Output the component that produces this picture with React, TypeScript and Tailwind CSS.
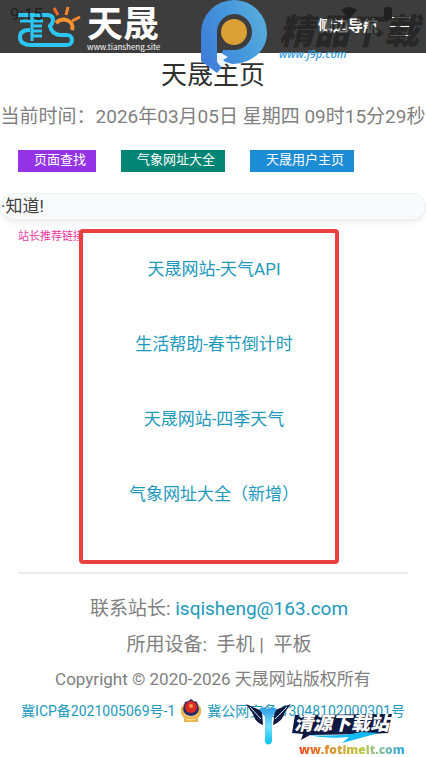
import React from "react";

const links = ["天晟网站-天气API", "生活帮助-春节倒计时", "天晟网站-四季天气", "气象网址大全（新增）"];

function SiteLogo() {
  return (
    <svg viewBox="0 0 66 44" className="h-11 w-[66px]" fill="none" aria-hidden="true">
      <path
        d="M1 10 H30 Q36 10 36 15 Q36 18 33 21 Q35 30 44 30 H50 A5 5 0 0 1 50 40 H15 C5 40 3 36 3 32 C3 26 8 25 13 25"
        stroke="#2cc6f5"
        strokeWidth="4"
      />
      <path d="M3 16 H26 M15 8 V36 M15 21 H25 M15 26 H25 M15 31 H25" stroke="#2cc6f5" strokeWidth="3" />
      <path d="M39 18 C46 11 58 16 55 25" stroke="#fa9132" strokeWidth="4" />
      <path d="M37 3 L41 10" stroke="#f06a24" strokeWidth="3" />
      <path d="M51 2 L49 10 M63 12 L55 16" stroke="#f8872c" strokeWidth="3" />
    </svg>
  );
}

function RoundMark() {
  return (
    <svg viewBox="0 0 68 76" className="absolute top-0 left-[200px] h-[76px] w-[68px]" aria-hidden="true">
      <defs>
        <linearGradient id="mark" x1="0" y1="0.6" x2="1" y2="0.2">
          <stop offset="0" stopColor="#3f7fda" />
          <stop offset="0.5" stopColor="#4598dc" />
          <stop offset="1" stopColor="#5aaeda" />
        </linearGradient>
      </defs>
      <path
        fill="url(#mark)"
        fillRule="evenodd"
        d="M34 0 A33 33 0 0 1 67 33 C67 52 50 64 32 64 L26 62 L17 73 L1 61 V33 A33 33 0 0 1 34 0 Z M34 14 A18 18 0 0 0 17 32 V54 L21 57 L23 50 H34 A18 18 0 0 0 52 32 A18 18 0 0 0 34 14 Z"
      />
      <path fill="#edf6fc" d="M17 53 H21 L28 57 L23 60 L27 63 L21 67 L17 62 Z" />
      <circle cx="34" cy="32" r="13" fill="#dba034" />
    </svg>
  );
}

function PoliceBadge() {
  return (
    <svg viewBox="0 0 22 24" className="h-6 w-[22px]" aria-hidden="true">
      <path d="M1 9 Q0 16 4 19 V23 H18 V19 Q22 16 21 9 L18 5 H4 Z" fill="#e7b64f" />
      <path d="M5 3 Q8 3 11 0 Q14 3 17 3 L19 10 Q18 16 11 18 Q4 16 3 10 Z" fill="#29296b" />
      <circle cx="11" cy="8" r="6" fill="#d92b22" />
      <circle cx="11" cy="7" r="2" fill="#f5994c" />
      <path d="M4 15 Q11 20 18 15 M6 20 Q11 22 16 20" stroke="#fbe09a" fill="none" />
    </svg>
  );
}

function FooterMark() {
  return (
    <div className="pointer-events-none absolute top-[700px] left-[246px] h-[57px] w-[160px]">
      <svg viewBox="0 0 160 57" className="absolute inset-0 h-full w-full" aria-hidden="true">
        <defs>
          <linearGradient id="blade" x1="0" y1="0" x2="0" y2="1">
            <stop offset="0" stopColor="#2a9ee6" />
            <stop offset="0.5" stopColor="#79e0fb" />
            <stop offset="1" stopColor="#08c1f0" />
          </linearGradient>
        </defs>
        <path d="M0 4 L16 11 L17 25 Q9 22 7 14 Z M45 4 L29 10 L27 25 Q37 21 39 12 Z" fill="#101941" />
        <path d="M4 7 L15 19 M41 7 L29 19" stroke="#c9effc" strokeWidth="1" />
        <path d="M13 9 Q18 6 22 9 Q27 6 31 9 L26 17 V42 Q22 47 19 42 V17 Z" fill="url(#blade)" />
        <path d="M49 15 L146 14 L142 33 L124 34 L64 35 L55 40 L57 34 L46 33 Z" fill="#101941" />
        <path d="M61 35 Q95 37 115 32 L133 33 L96 43 L103 37 Q80 39 61 35 Z" fill="#14baf4" />
      </svg>
      <span className="absolute top-[12px] left-[48px] text-[19px] leading-6 font-black whitespace-nowrap text-white italic">
        清源下载站
      </span>
      <span className="absolute top-[42px] left-[53px] bg-linear-to-r from-[#ed4b21] via-[#b8c83a] via-60% to-[#20a8e8] bg-clip-text font-['Open_Sans'] text-[12px] leading-4 font-extrabold text-transparent">
        ww.fotimeit.com
      </span>
    </div>
  );
}

export default function App() {
  return (
    <div className="relative min-h-screen overflow-hidden bg-white font-[Roboto,'Noto_Sans_CJK_SC',sans-serif] text-[#808080]">
      <header className="flex h-[53px] items-center bg-[#3d3d3d] pr-4 pl-[17px] text-white">
        <a href="#home" className="flex items-center gap-1" aria-label="天晟">
          <SiteLogo />
          <span className="flex flex-col pt-1">
            <span className="text-[36px] leading-9 font-bold">天晟</span>
            <span className="font-['Noto_Sans_CJK_SC'] text-[8px] leading-2">www.tiansheng.site</span>
          </span>
        </a>
        <button className="ml-auto flex items-center gap-3 text-[15px] font-bold">
          侧边导航
          <span className="flex w-5 flex-col gap-2">
            <span className="h-px bg-white" />
            <span className="h-px bg-white" />
            <span className="h-px bg-white" />
          </span>
        </button>
      </header>

      <span className="absolute top-[4px] left-[10px] text-[17px] leading-5 text-[#171717]/80">9:15</span>
      <svg viewBox="0 0 54 18" className="absolute top-[5px] left-[340px] h-[18px] w-[54px]" fill="#202020" aria-hidden="true">
        <path d="M1 5 Q9 -1 17 5 L9 14 Z" />
        <rect x="44" y="2" width="8" height="13" rx="2" />
      </svg>
      <span className="pointer-events-none absolute top-[13px] left-[279px] text-[35px] leading-10 font-black whitespace-nowrap text-[#202020]/75 italic">
        精品下载
      </span>
      <span className="absolute top-[46px] left-[279px] font-['Open_Sans'] text-[11px] leading-4 font-semibold text-[#3ba0df] italic">
        www.j9p.com
      </span>

      <main>
        <h1 className="mt-1 text-center text-[26px] leading-9 text-[#303030]">天晟主页</h1>
        <p className="mt-3 flex justify-center text-[19px] leading-6 whitespace-nowrap">
          当前时间：2026年03月05日 星期四 09时15分29秒
        </p>
        <nav className="mt-[21px] flex gap-[25px] px-[18px] text-[13px] leading-5 whitespace-nowrap text-white">
          <button className="h-[22px] bg-[#9333e5] pr-[10px] pb-[2px] pl-4">页面查找</button>
          <button className="h-[22px] bg-[#058575] pr-[10px] pb-[2px] pl-4">气象网址大全</button>
          <button className="h-[22px] bg-[#1c8cd4] pr-[10px] pb-[2px] pl-4">天晟用户主页</button>
        </nav>
        <div className="mt-[21px] overflow-hidden rounded-full border border-[#eef1f4] bg-[#f9fafc] text-[17px] leading-[25px] text-[#404040] shadow-md shadow-black/5">
          ·知道!
        </div>

        <section className="relative mx-[18px] border-b-2 border-[#ebebeb] pt-[9px] pb-[40px]">
          <h2 className="text-[11px] leading-4 text-[#ed36a0]">站长推荐链接</h2>
          <ul className="flex flex-col pl-[2px] text-center text-[17px] leading-[75px] text-[#2199bd]">
            {links.map((label) => (
              <li key={label} className="h-[75px] first:-mt-[13px]">
                <a href="#link">{label}</a>
              </li>
            ))}
          </ul>
          <div className="pointer-events-none absolute top-[9px] right-[69px] bottom-[8px] left-[61px] rounded-sm border-4 border-[#e94040]" />
        </section>

        <footer className="pt-[17px] text-center whitespace-nowrap">
          <p className="pl-3 text-[19px] leading-9">
            联系站长:{" "}
            <a href="mailto:isqisheng@163.com" className="text-[#2199bd]">
              isqisheng@163.com
            </a>
          </p>
          <p className="pl-3 text-[19px] leading-9">所用设备:&nbsp; 手机 |&nbsp; 平板</p>
          <p className="text-[17px] leading-8">Copyright © 2020-2026 天晟网站版权所有</p>
          <p className="flex items-center justify-center gap-[5px] text-[14px] leading-8 text-[#2199bd]">
            <a href="#icp">冀ICP备2021005069号-1</a>
            <PoliceBadge />
            <a href="#police">冀公网安备 13048102000301号</a>
          </p>
        </footer>
      </main>
      <RoundMark />
      <FooterMark />
    </div>
  );
}
